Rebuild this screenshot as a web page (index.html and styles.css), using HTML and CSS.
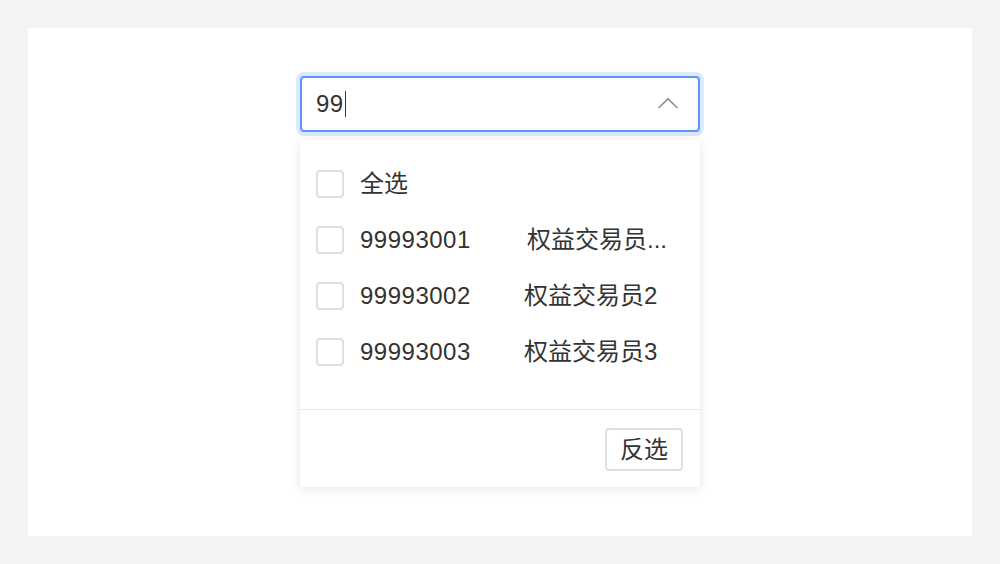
FILE: index.html
```html
<!DOCTYPE html>
<html lang="zh">
<head>
<meta charset="utf-8">
<link rel="stylesheet" href="styles.css">
</head>
<body>
<div class="page">
  <div class="card">
    <div class="select">
      <div class="input">
        <span class="value">99</span><span class="caret"></span>
        <svg class="arrow" width="22" height="13" viewBox="0 0 22 13"><path d="M1.5 11 L11 1.8 L20.5 11" fill="none" stroke="#959595" stroke-width="1.7"/></svg>
      </div>
      <div class="dropdown">
        <div class="list">
          <div class="item"><span class="box"></span><span class="text">全选</span></div>
          <div class="item"><span class="box"></span><span class="text"><span class="code">99993001</span><span class="name first">权益交易员...</span></span></div>
          <div class="item"><span class="box"></span><span class="text"><span class="code">99993002</span><span class="name">权益交易员2</span></span></div>
          <div class="item"><span class="box"></span><span class="text"><span class="code">99993003</span><span class="name">权益交易员3</span></span></div>
        </div>
        <div class="footer">
          <button class="btn">反选</button>
        </div>
      </div>
    </div>
  </div>
</div>
</body>
</html>
```

FILE: styles.css
```css
html, body {
  margin: 0;
  padding: 0;
}
body {
  background: #f3f3f3;
  font-family: "Liberation Sans", "Noto Sans CJK SC", sans-serif;
  color: #333;
}
.page {
  width: 1000px;
  height: 564px;
  padding: 28px;
  box-sizing: border-box;
}
.card {
  background: #fff;
  height: 508px;
  display: flex;
  justify-content: center;
  padding-top: 48px;
  box-sizing: border-box;
}
.select {
  width: 400px;
}
.input {
  height: 56px;
  box-sizing: border-box;
  border: 2px solid #5a98f6;
  border-radius: 4px;
  box-shadow: 0 0 0 4px #dce8fd;
  display: flex;
  align-items: center;
  padding: 0 19px 0 14px;
  font-size: 24px;
  color: #333;
}
.value {
  line-height: 28px;
  letter-spacing: 0.4px;
}
.caret {
  width: 1.5px;
  height: 26px;
  background: #333;
  margin-left: 1px;
}
.arrow {
  margin-left: auto;
  margin-top: -2px;
}
.dropdown {
  margin-top: 8px;
  background: #fff;
  border-radius: 4px;
  box-shadow: 0 2px 12px rgba(0, 0, 0, 0.1);
}
.list {
  padding: 16px 0 29px;
  border-bottom: 1px solid #e8e8e8;
}
.item {
  height: 56px;
  display: flex;
  align-items: center;
  padding-left: 16px;
  font-size: 24px;
}
.box {
  width: 28px;
  height: 28px;
  box-sizing: border-box;
  border: 2px solid #dcdfe6;
  border-radius: 4px;
  margin-right: 16px;
  flex: none;
}
.text {
  line-height: 32px;
  white-space: nowrap;
}
.code {
  display: inline-block;
  width: 164px;
  letter-spacing: 0.5px;
}
.name.first {
  margin-left: 3px;
}
.footer {
  display: flex;
  justify-content: flex-end;
  padding: 18px 17px 16px;
}
.btn {
  width: 78px;
  height: 43px;
  box-sizing: border-box;
  border: 2px solid #dcdfe6;
  border-radius: 4px;
  background: #fff;
  font-family: "Liberation Sans", "Noto Sans CJK SC", sans-serif;
  font-size: 24px;
  line-height: 1;
  color: #333;
  padding: 0;
}
```
